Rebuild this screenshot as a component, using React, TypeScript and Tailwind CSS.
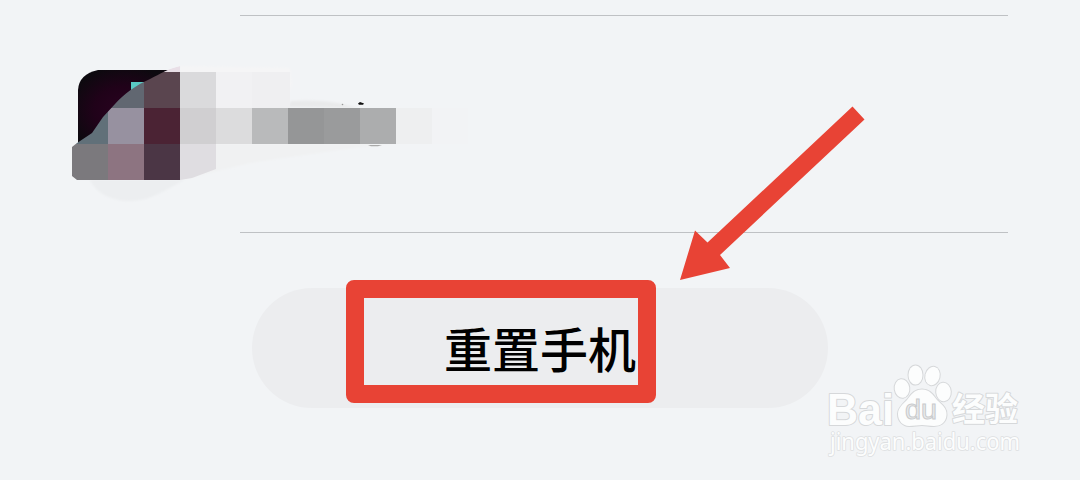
import React from 'react';

interface Cell {
  x: number;
  y: number;
  w: number;
  fill: string;
}

const CELL_HEIGHT = 36;

// blocks over the app icon, clipped to the brush stroke
const iconCells: Cell[] = [
  { x: 72,  y: 72,  w: 72, fill: '#616771' },
  { x: 144, y: 72,  w: 36, fill: '#5a454f' },
  { x: 72,  y: 108, w: 36, fill: '#617079' },
  { x: 108, y: 108, w: 36, fill: '#9791a0' },
  { x: 144, y: 108, w: 36, fill: '#4b2334' },
  { x: 72,  y: 144, w: 36, fill: '#7b797d' },
  { x: 108, y: 144, w: 36, fill: '#8d7481' },
  { x: 144, y: 144, w: 36, fill: '#4b3645' },
];

// blocks over the app name
const labelCells: Cell[] = [
  { x: 180, y: 72,  w: 36, fill: '#dadadc' },
  { x: 216, y: 72,  w: 36, fill: '#f1f1f3' },
  { x: 252, y: 72,  w: 38, fill: '#efeff1' },
  { x: 180, y: 108, w: 36, fill: '#d0cfd1' },
  { x: 216, y: 108, w: 36, fill: '#dcdcdd' },
  { x: 252, y: 108, w: 36, fill: '#b9babb' },
  { x: 288, y: 108, w: 36, fill: '#959697' },
  { x: 324, y: 108, w: 36, fill: '#9a9b9c' },
  { x: 360, y: 108, w: 36, fill: '#acadae' },
  { x: 396, y: 108, w: 36, fill: '#eeeff0' },
  { x: 432, y: 108, w: 36, fill: '#f2f3f5' },
];

const Cells: React.FC<{ cells: Cell[] }> = ({ cells }) => (
  <>
    {cells.map((c) => (
      <rect key={`${c.x}-${c.y}`} x={c.x} y={c.y} width={c.w} height={CELL_HEIGHT} fill={c.fill} />
    ))}
  </>
);

const BlurredApp: React.FC = () => (
  <svg className="block h-[216px] w-[480px]" viewBox="0 16 480 216" aria-hidden="true">
    <defs>
      <clipPath id="brush">
        <path d="M180 66 C169 68 160 74 150 79 C136 85 124 94 115 104 L103 117 L92 133 L77 143 L72 147 L72 176 L77 180 L180 180 Z" />
      </clipPath>
      <radialGradient id="icon" cx="50%" cy="55%" r="60%">
        <stop offset="0%" stopColor="#2a0220" />
        <stop offset="55%" stopColor="#200219" />
        <stop offset="100%" stopColor="#0d090f" />
      </radialGradient>
      <filter id="soft">
        <feGaussianBlur stdDeviation="1" />
      </filter>
    </defs>

    <g filter="url(#soft)">
      <path d="M180 66 L290 68 L292 84 L286 99 L180 100 Z" fill="#f5f5f6" />
      <path d="M90 180 C96 193 111 201 130 201 C150 201 166 190 184 180 Z" fill="#eceef0" />
      <path d="M180 144 H396 L360 147 L250 163 L180 180 Z" fill="#f0f1f2" />
      <path d="M288 107 L291 101 Q325 99 350 106 L360 108 Z" fill="#e9eaeb" />
    </g>
    <path d="M180 144 H216 V169 L192 178 L180 180 Z" fill="#dfdde1" />
    <Cells cells={labelCells} />

    <path d="M98 70 H171 V144 H78 V90 Q79 74 98 70 Z" fill="url(#icon)" />
    <rect x="131" y="82" width="14" height="10" fill="#59c9c4" />
    <g clipPath="url(#brush)">
      <path d="M166 70 L180 66 V72 H160 Z" fill="#e9dfe7" />
      <Cells cells={iconCells} />
    </g>

    {/* remains of the app name outside the stroke */}
    <path d="M358 103.5 L360 102 L364 103.5 L363 104.7 L359 104.7 Z" fill="#111" />
    <circle cx="342.5" cy="104.5" r="0.8" fill="#999" />
    <path d="M368 145 H382 L378 146.3 H371 Z" fill="#aaa" />
  </svg>
);

const Arrow: React.FC = () => (
  <svg className="pointer-events-none absolute left-[670px] top-[95px] h-[195px] w-[205px]" viewBox="670 95 205 195" aria-hidden="true">
    <path d="M852.5 106.5 L864.5 119.5 L720 255 L730 268 L680 280 L695 230.5 L707.5 242.5 Z" fill="#e84335" />
  </svg>
);

const Watermark: React.FC = () => (
  <svg className="pointer-events-none absolute left-[820px] top-[358px] h-[112px] w-[210px]" viewBox="820 358 210 112" aria-label="Baidu 经验">
    <g fill="#fcfdfd" stroke="#d6d8da" strokeWidth="2" strokeLinejoin="round" style={{ paintOrder: 'stroke' }}>
      <text x="827" y="424.5" fontSize="44" textLength="67" lengthAdjust="spacingAndGlyphs" className="font-['Liberation_Sans',sans-serif] font-bold">Bai</text>
      <ellipse cx="902" cy="388.5" rx="7.3" ry="9.3" transform="rotate(-8 902 388.5)" />
      <ellipse cx="915.5" cy="375" rx="7" ry="9.6" />
      <ellipse cx="932.5" cy="376" rx="7.1" ry="9.3" transform="rotate(14 932.5 376)" />
      <ellipse cx="943.5" cy="392" rx="7.3" ry="9.3" transform="rotate(-4 943.5 392)" />
      <path d="M922 389.5 C930 389.5 933 395 937 400 C942 405 947 408 946.5 415 C946 423 940 426 934 426 C929 426 926 425 922 425 C918 425 914 426 909 426 C903 426 898 421 898 414 C898 408 903 404 907 400 C911 395 914 389.5 922 389.5 Z" />
      <text x="952" y="421" fontSize="33" textLength="66" lengthAdjust="spacingAndGlyphs" className="font-['Noto_Sans_CJK_SC',sans-serif] font-bold">经验</text>
      <text x="830" y="450" fontSize="23" textLength="190" lengthAdjust="spacingAndGlyphs" stroke="#dddfe1" strokeWidth="1.6" className="font-['Noto_Sans',sans-serif] font-normal">jingyan.baidu.com</text>
    </g>
    <text x="905" y="419" fontSize="27" textLength="32" lengthAdjust="spacingAndGlyphs" fill="#e9ebec" stroke="#c9cbcd" strokeWidth="1" className="font-['Liberation_Sans',sans-serif]">du</text>
  </svg>
);

const App: React.FC = () => {
  return (
    <main className="relative flex h-[480px] w-[1080px] flex-col overflow-hidden bg-[#f2f4f6] pt-[15px]">
      <section className="flex flex-col">
        <hr className="ml-60 h-px w-3xl border-0 bg-[#bfc1c4]" />
        <BlurredApp />
        <hr className="ml-60 h-px w-3xl border-0 bg-[#bfc1c4]" />
      </section>

      <div className="flex justify-center pt-[55px]">
        <button
          type="button"
          className="flex h-[120px] w-xl items-center justify-center rounded-full bg-[#ecedef] pb-0.5 text-5xl font-medium text-black
                     font-['Noto_Sans_CJK_SC',sans-serif]"
        >
          重置手机
        </button>
      </div>

      {/* Annotations */}
      <div className="pointer-events-none absolute left-[346px] top-[280px] h-[123px] w-[310px] rounded-lg border-18 border-[#e84335]" />
      <Arrow />
      <Watermark />
    </main>
  );
};

export default App;
